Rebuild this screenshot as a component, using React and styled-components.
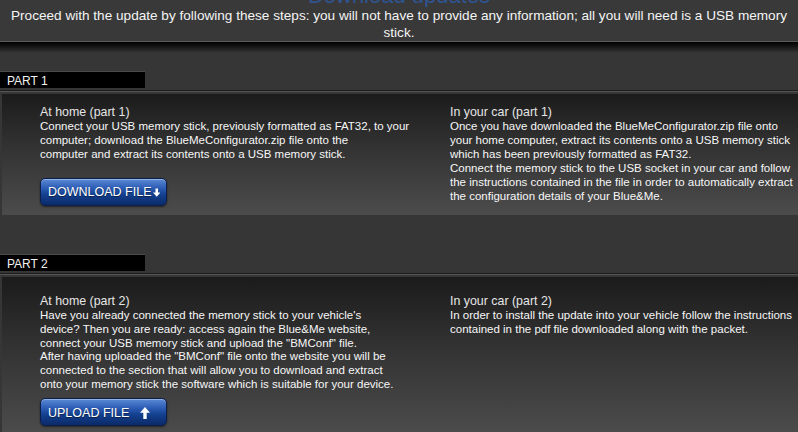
import React from "react";
import styled, { createGlobalStyle } from "styled-components";

const Global = createGlobalStyle`
  html, body { margin: 0; padding: 0; }
  body {
    background: #363636;
    font-family: "Liberation Sans", Arial, sans-serif;
    color: #fff;
    overflow: hidden;
  }
`;

const Page = styled.div`
  width: 798px;
  height: 432px;
  overflow: hidden;
  background: #363636;
`;

const Header = styled.header`
  background: #393939;
  text-align: center;
  padding: 0 8px;
  border-bottom: 1px solid #5c5c5c;
`;

const TitleClip = styled.div`
  height: 7px;
  overflow: hidden;
  contain: paint;
`;

const Title = styled.h1`
  margin: 0;
  height: 22px;
  font-size: 22px;
  line-height: 22px;
  font-weight: normal;
  color: #2f5491;
  white-space: nowrap;
  clip-path: inset(15px 0 0 0);
  transform: translateY(-15px);
`;

const Intro = styled.p`
  margin: 0;
  font-size: 13.6px;
  line-height: 17px;
  color: #f4f4f4;
`;

const Shade = styled.div`
  height: 11px;
  background: linear-gradient(#000 0%, #141414 40%, #363636 100%);
`;

const Section = styled.section`
  margin-top: ${(p) => p.$gap}px;
`;

const PartLabel = styled.div`
  width: 138px;
  height: 16px;
  padding-left: 7px;
  background: #000;
  border-top: 1px solid #4a4a4a;
  color: #f2f2f2;
  font-size: 12px;
  line-height: 18px;
`;

const Rule = styled.div`
  height: 1px;
  margin-top: 2px;
  background: #1c1c1c;
  border-bottom: 1px solid #555;
`;

const Panel = styled.div`
  margin: 2px 0 0 2px;
  padding: ${(p) => p.$top}px 0 9px 38px;
  background: linear-gradient(#1b1b1b 0%, #2e2e2e 35%, #4c4c4c 100%);
  display: grid;
  grid-template-columns: 362px 1fr;
  column-gap: 48px;
`;

const Column = styled.div`
  display: flex;
  flex-direction: column;
  align-items: flex-start;
  min-width: 0;
`;

const Heading = styled.h2`
  margin: 0;
  font-size: 12.4px;
  line-height: 16px;
  font-weight: normal;
  color: #e6e6e6;
`;

const Body = styled.p`
  margin: 0;
  font-size: 11.5px;
  line-height: 13.9px;
  color: #f7f7f7;
`;

const Line = styled.span`
  display: block;
  white-space: nowrap;
`;

const Button = styled.button`
  margin-top: ${(p) => p.$mt}px;
  width: 127px;
  height: 28px;
  display: flex;
  align-items: center;
  justify-content: ${(p) => (p.$spread ? "space-between" : "flex-start")};
  gap: 1px;
  padding: 1px ${(p) => (p.$spread ? 16 : 6)}px 0 7px;
  border: 1px solid #0c1f4a;
  border-radius: 5px;
  background: linear-gradient(#5b8ad6 0%, #2c5cb4 35%, #13408f 60%, #0b2a68 100%);
  box-shadow: inset 0 1px 0 rgba(255, 255, 255, 0.35), 0 1px 2px rgba(0, 0, 0, 0.5);
  color: #fff;
  font-family: "Liberation Sans", Arial, sans-serif;
  font-size: 12.5px;
  white-space: nowrap;
  text-shadow: 0 1px 1px rgba(0, 0, 0, 0.5);
  cursor: pointer;
`;

const ArrowDown = () => (
  <svg width="10" height="11" viewBox="0 0 10 11">
    <path d="M3.3 0h3.4v5.5H10L5 11 0 5.5h3.3z" fill="#fff" />
  </svg>
);

const ArrowUp = () => (
  <svg width="10" height="12" viewBox="0 0 10 12">
    <path d="M3.3 12h3.4V5.8H10L5 0 0 5.8h3.3z" fill="#fff" />
  </svg>
);

const Text = ({ lines }) => (
  <Body>
    {lines.map((l, i) => (
      <Line key={i}>{l}</Line>
    ))}
  </Body>
);

const parts = [
  {
    label: "PART 1",
    gap: 18,
    top: 10,
    home: {
      title: "At home (part 1)",
      lines: [
        "Connect your USB memory stick, previously formatted as FAT32, to your",
        "computer; download the BlueMeConfigurator.zip file onto the",
        "computer and extract its contents onto a USB memory stick.",
      ],
    },
    car: {
      title: "In your car (part 1)",
      lines: [
        "Once you have downloaded the BlueMeConfigurator.zip file onto",
        "your home computer, extract its contents onto a USB memory stick",
        "which has been previously formatted as FAT32.",
        "Connect the memory stick to the USB socket in your car and follow",
        "the instructions contained in the file in order to automatically extract",
        "the configuration details of your Blue&Me.",
      ],
    },
    button: { text: "DOWNLOAD FILE", up: false, mt: 16 },
  },
  {
    label: "PART 2",
    gap: 39,
    top: 16,
    home: {
      title: "At home (part 2)",
      lines: [
        "Have you already connected the memory stick to your vehicle's",
        "device? Then you are ready: access again the Blue&Me website,",
        'connect your USB memory stick and upload the "BMConf" file.',
        'After having uploaded the "BMConf" file onto the website you will be',
        "connected to the section that will allow you to download and extract",
        "onto your memory stick the software which is suitable for your device.",
      ],
    },
    car: {
      title: "In your car (part 2)",
      lines: [
        "In order to install the update into your vehicle follow the instructions",
        "contained in the pdf file downloaded along with the packet.",
      ],
    },
    button: { text: "UPLOAD FILE", up: true, mt: 6 },
  },
];

export default function App() {
  return (
    <Page>
      <Global />
      <Header>
        <TitleClip>
          <Title>Download updates</Title>
        </TitleClip>
        <Intro>
          Proceed with the update by following these steps: you will not have to provide any
          information; all you will need is a USB memory stick.
        </Intro>
      </Header>
      <Shade />

      {parts.map((p) => (
        <Section key={p.label} $gap={p.gap}>
          <PartLabel>{p.label}</PartLabel>
          <Rule />
          <Panel $top={p.top}>
            <Column>
              <Heading>{p.home.title}</Heading>
              <Text lines={p.home.lines} />
              <Button $mt={p.button.mt} $spread={p.button.up}>
                {p.button.text}
                {p.button.up ? <ArrowUp /> : <ArrowDown />}
              </Button>
            </Column>
            <Column>
              <Heading>{p.car.title}</Heading>
              <Text lines={p.car.lines} />
            </Column>
          </Panel>
        </Section>
      ))}
    </Page>
  );
}
